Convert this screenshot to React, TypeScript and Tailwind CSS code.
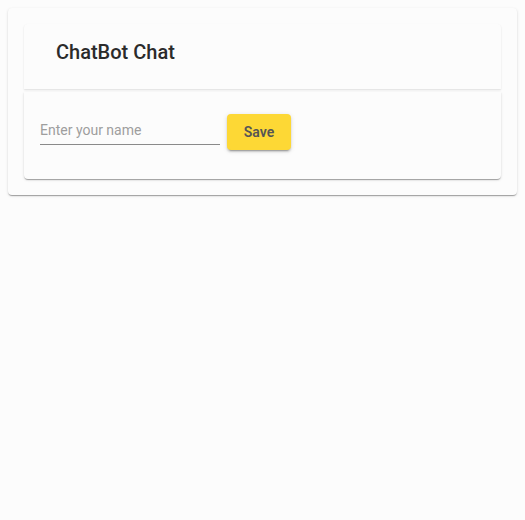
import React, { useState } from "react";

const shadow =
  "shadow-[0_2px_1px_-1px_rgba(0,0,0,0.2),0_1px_1px_0_rgba(0,0,0,0.14),0_1px_3px_0_rgba(0,0,0,0.12)]";

export default function App() {
  const [name, setName] = useState("");

  return (
    <div className="min-h-[520px] bg-[#fcfcfc] p-2 font-['Roboto',sans-serif]">
      <div className={`rounded bg-[#fcfcfc] p-4 ${shadow}`}>
        <div className="h-[65px] rounded-t bg-[#fcfcfc] px-8 pt-[14px] shadow-[0_1px_2px_0_rgba(0,0,0,0.12)]">
          <h1 className="text-[20px] font-medium leading-[28px] text-[#2b2b2b]">ChatBot Chat</h1>
        </div>
        <div className={`mt-[3px] flex items-center gap-[7px] rounded-b bg-[#fcfcfc] px-4 pb-[29px] pt-[22px] ${shadow}`}>
          <input
            type="text"
            value={name}
            onChange={(e) => setName(e.target.value)}
            placeholder="Enter your name"
            className="mt-[1px] w-[180px] border-b border-[#8a8a8a] bg-transparent pb-[3px] text-[14px] text-[#212121] outline-none placeholder:text-[#9e9e9e]"
          />
          <button className="h-9 min-w-16 rounded bg-[#fdd835] px-4 text-[14px] font-semibold text-[#555555] shadow-[0_3px_1px_-2px_rgba(0,0,0,0.2),0_2px_2px_0_rgba(0,0,0,0.14),0_1px_5px_0_rgba(0,0,0,0.12)]">
            Save
          </button>
        </div>
      </div>
    </div>
  );
}
